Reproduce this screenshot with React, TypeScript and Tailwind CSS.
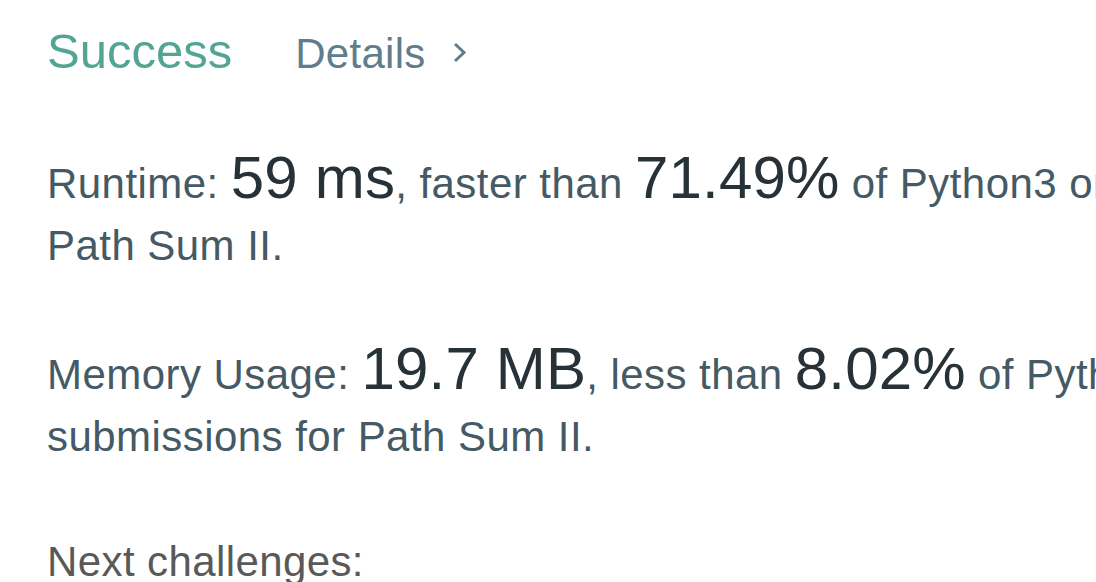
export default function App() {
  return (
    <main
      className="w-[1096px] h-[582px] overflow-hidden bg-white pl-[47px] pt-[27px]"
      style={{ fontFamily: '"Liberation Sans", Arial, sans-serif' }}
    >
      {/* Header */}
      <div className="flex items-baseline leading-none">
        <span className="text-[49px] text-[#52a493]">Success</span>
        <span className="ml-[63px] text-[42px] text-[#607d8b] tracking-[0.3px]">Details</span>
        <svg
          className="ml-[27px] self-center mt-[2px]"
          width="14"
          height="21"
          viewBox="0 0 14 21"
          fill="none"
          stroke="#607d8b"
          strokeWidth="3"
        >
          <polyline points="2,2 11,10.5 2,19" />
        </svg>
      </div>

      {/* Runtime */}
      <p className="mt-[71px] w-[1495px] text-[42px] leading-[62px] tracking-[0.45px] text-[#455a64]">
        Runtime: <span className="text-[60px] tracking-[0.2px] text-[#263238]">59 ms</span>, faster than{" "}
        <span className="text-[60px] tracking-[0.2px] text-[#263238]">71.49%</span> of Python3 online
        submissions for Path Sum II.
      </p>

      {/* Memory */}
      <p className="mt-[61px] w-[1495px] text-[42px] leading-[62px] tracking-[0.45px] text-[#455a64]">
        Memory Usage: <span className="text-[60px] tracking-[0.2px] text-[#263238]">19.7 MB</span>, less
        than <span className="text-[60px] tracking-[0.2px] text-[#263238]">8.02%</span> of Python3 online
        submissions for Path Sum II.
      </p>

      <p className="mt-[63px] text-[42px] leading-[62px] tracking-[0.4px] text-[#595959]">Next challenges:</p>
    </main>
  );
}
